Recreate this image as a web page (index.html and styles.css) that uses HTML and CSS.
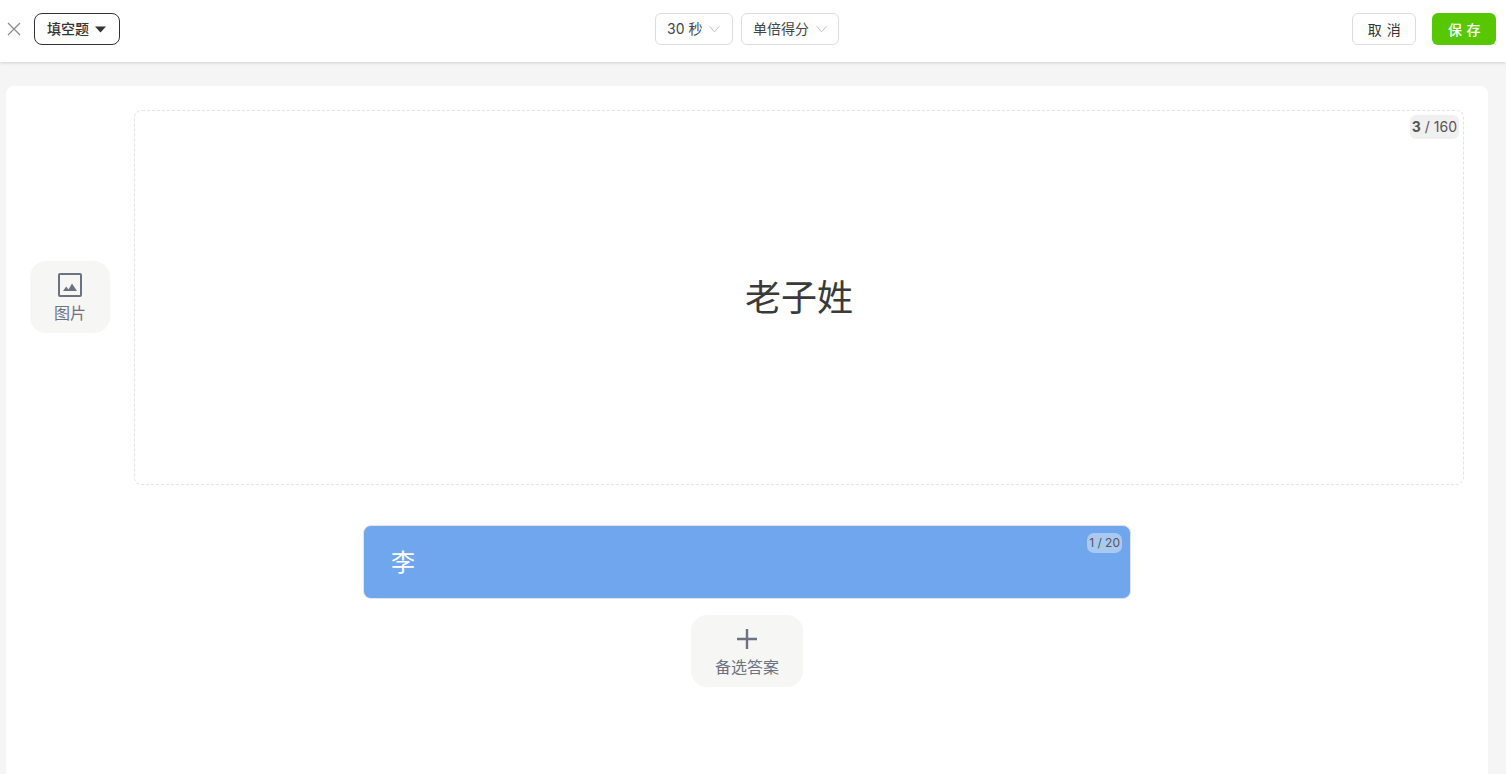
FILE: index.html
```html
<!DOCTYPE html>
<html lang="zh-CN">
<head>
    <meta charset="UTF-8">
    <meta name="viewport" content="width=device-width, initial-scale=1.0">
    <title>填空题</title>
    <link rel="stylesheet" href="styles.css">
</head>
<body>
    <header class="topbar">
        <div class="topbar-left">
            <button class="close-btn" aria-label="关闭">
                <svg width="14" height="14" viewBox="0 0 14 14"><path d="M1 1l12 12M13 1L1 13" stroke="#8c8c8c" stroke-width="1.2" fill="none"/></svg>
            </button>
            <button class="type-btn">
                <span>填空题</span>
                <svg width="11" height="7" viewBox="0 0 11 7"><path d="M0 0.5h11L5.5 6.5z" fill="#333"/></svg>
            </button>
        </div>
        <div class="topbar-center">
            <button class="select select-time">
                <span>30 秒</span>
                <svg width="11" height="8" viewBox="0 0 11 8"><path d="M0.5 1l5 6 5-6" stroke="#c4c4c4" fill="none"/></svg>
            </button>
            <button class="select select-score">
                <span>单倍得分</span>
                <svg width="11" height="8" viewBox="0 0 11 8"><path d="M0.5 1l5 6 5-6" stroke="#c4c4c4" fill="none"/></svg>
            </button>
        </div>
        <div class="topbar-right">
            <button class="btn btn-cancel">取 消</button>
            <button class="btn btn-save">保 存</button>
        </div>
    </header>

    <main class="card">
        <div class="question-row">
            <button class="tool-btn tool-image">
                <svg width="24" height="24" viewBox="0 0 24 24">
                    <rect x="1" y="1" width="22" height="22" rx="1" fill="none" stroke="#6b7280" stroke-width="2"/>
                    <path d="M5 18l3.2-4.4 2.3 3 3.5-6 5 7.4z" fill="#6b7280"/>
                </svg>
                <span>图片</span>
            </button>
            <div class="question-box">
                <span class="counter">
                    <b>3</b> / 160
                </span>
                <div class="question-text">老子姓</div>
            </div>
        </div>

        <div class="answer">
            <span class="answer-text">李</span>
            <span class="answer-counter">1 / 20</span>
        </div>

        <button class="tool-btn tool-add">
            <svg width="20" height="20" viewBox="0 0 20 20"><path d="M10 0v20M0 10h20" stroke="#6b7280" stroke-width="2.4" fill="none"/></svg>
            <span>备选答案</span>
        </button>
    </main>
</body>
</html>
```

FILE: styles.css
```css
* {
    box-sizing: border-box;
}
html, body {
    height: 100%;
}
body {
    margin: 0;
    background: #f5f5f5;
    font-family: Inter, "Noto Sans CJK SC", sans-serif;
    color: #333;
    overflow: hidden;
}
button {
    font-family: inherit;
    cursor: pointer;
}
.topbar {
    height: 62px;
    background: white;
    box-shadow: 0 1px 3px rgba(0,0,0,0.15);
    display: grid;
    grid-template-columns: 1fr auto 1fr;
    align-items: center;
    padding: 0 10px 4px 7px;
}
.topbar-left {
    display: flex;
    align-items: center;
    gap: 13px;
}
.close-btn {
    background: none;
    border: none;
    padding: 0;
    width: 14px;
    height: 14px;
    display: flex;
}
.type-btn {
    width: 86px;
    height: 32px;
    background: white;
    border: 1px solid #333;
    border-radius: 8px;
    font-size: 14px;
    font-weight: 500;
    color: #333;
    padding: 0 0 0 12px;
    display: flex;
    align-items: center;
    gap: 6px;
}
.type-btn span,
.select span {
    line-height: 20px;
    margin-top: -1px;
}
.topbar-center {
    display: flex;
    gap: 8px;
    margin-right: 9px;
}
.select {
    height: 32px;
    background: white;
    border: 1px solid #ddd;
    border-radius: 6px;
    font-size: 14px;
    color: #444;
    padding: 0 0 0 11px;
    display: flex;
    align-items: center;
    gap: 7px;
}
.select-time {
    width: 78px;
}
.select-score {
    width: 98px;
}
.topbar-right {
    display: flex;
    justify-content: flex-end;
    gap: 16px;
}
.btn {
    width: 64px;
    height: 32px;
    border-radius: 6px;
    font-size: 14px;
    letter-spacing: 0.5px;
    padding: 0 0 1px 1px;
}
.btn-cancel {
    background: white;
    border: 1px solid #ddd;
    color: #333;
}
.btn-save {
    background: #57c700;
    border: none;
    color: white;
    font-weight: 500;
}
.card {
    margin: 24px 18px 0 6px;
    height: 720px;
    background: white;
    border-radius: 8px;
    padding: 24px 24px 0;
    display: flex;
    flex-direction: column;
    align-items: center;
}
.question-row {
    width: 100%;
    display: flex;
    align-items: center;
    gap: 24px;
    margin-bottom: 40px;
}
.tool-btn {
    background: #f6f6f5;
    border: none;
    border-radius: 16px;
    height: 72px;
    padding: 0;
    flex-shrink: 0;
    display: flex;
    flex-direction: column;
    align-items: center;
    color: #6b7280;
    font-size: 16px;
}
.tool-btn span {
    line-height: 20px;
}
.tool-image {
    width: 80px;
    padding-top: 12px;
    gap: 6px;
    margin-bottom: 1px;
}
.tool-add {
    width: 112px;
    padding-top: 14px;
    gap: 8px;
}
.question-box {
    flex: 1;
    height: 375px;
    border: 1px dashed #e4e4e4;
    border-radius: 8px;
    position: relative;
    display: flex;
    align-items: center;
    justify-content: center;
}
.question-text {
    font-size: 36px;
    line-height: 48px;
    color: #3a3a3a;
}
.counter {
    position: absolute;
    top: 4px;
    right: 4px;
    height: 24px;
    line-height: 24px;
    padding: 0 2px;
    background: #f0f0f0;
    border-radius: 6px;
    font-size: 14px;
    color: #555;
}
.answer {
    width: 768px;
    height: 74px;
    background: #70a6ee;
    border: 1px solid #e2e4e8;
    border-radius: 8px;
    position: relative;
    display: flex;
    align-items: center;
    padding: 0 0 3px 27px;
    margin-bottom: 16px;
}
.answer-text {
    font-size: 24px;
    color: white;
}
.answer-counter {
    position: absolute;
    top: 7px;
    right: 8px;
    height: 20px;
    line-height: 20px;
    padding: 0 2px;
    background: rgba(255,255,255,0.4);
    border-radius: 7px;
    font-size: 12px;
    color: #555;
}
```
